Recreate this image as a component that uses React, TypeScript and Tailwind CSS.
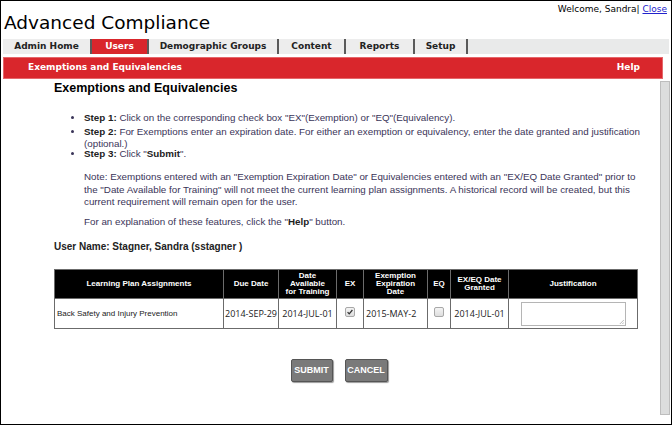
import React from 'react';

const tabs = [
  { label: 'Admin Home', w: 'w-[89px]' },
  { label: 'Users', w: 'w-[57px]', active: true },
  { label: 'Demographic Groups', w: 'w-[130px]' },
  { label: 'Content', w: 'w-[67px]' },
  { label: 'Reports', w: 'w-[69px]' },
  { label: 'Setup', w: 'w-[53px]' },
];

const cols = [
  { label: 'Learning Plan Assignments', w: 'w-[169px]', px: 'px-[2px]' },
  { label: 'Due Date', w: 'w-[55px]', px: 'px-[2px]' },
  { label: 'Date Available for Training', w: 'w-[58px]', px: 'px-[6px]' },
  { label: 'EX', w: 'w-[27px]', px: 'px-[2px]' },
  { label: 'Exemption Expiration Date', w: 'w-[64px]', px: 'px-[11px]' },
  { label: 'EQ', w: 'w-[23px]', px: 'px-[2px]' },
  { label: 'EX/EQ Date Granted', w: 'w-[58px]', px: 'px-[6px]' },
  { label: 'Justification', w: 'w-[129px]', px: 'px-[2px]' },
];

function Check({ checked }: { checked?: boolean }) {
  return (
    <span className="inline-flex h-[10px] w-[10px] items-center justify-center rounded-[2px] border border-[#a8a8a8] bg-gradient-to-b from-[#f4f4f4] to-[#dedede]">
      {checked && (
        <svg viewBox="0 0 10 10" className="h-[8px] w-[8px]">
          <path d="M2 5.2 L4 7.3 L8 2.5" fill="none" stroke="#333" strokeWidth="1.6" />
        </svg>
      )}
    </span>
  );
}

export default function App() {
  const verdana = { fontFamily: '"DejaVu Sans", Verdana, sans-serif' };
  const arial = { fontFamily: '"Liberation Sans", Arial, sans-serif' };
  const dateFont = { fontFamily: '"Open Sans", sans-serif' };

  return (
    <div className="flex h-[425px] w-[672px] flex-col overflow-hidden border border-black bg-white" style={verdana}>
      <div className="flex items-start justify-between">
        <h1 className="mt-[11px] ml-[3px] text-[18.5px] leading-[22px] text-black">Advanced Compliance</h1>
        <div className="mt-[2px] mr-[4px] text-[9px] text-black">
          Welcome, Sandra| <a className="text-[#2222cc] underline">Close</a>
        </div>
      </div>

      <div className="mt-[5px] ml-[2px] mr-[2px] flex h-[15px] bg-[#e9eaea]">
        {tabs.map((t) => (
          <div
            key={t.label}
            className={`${t.w} flex items-center justify-center border-r-2 border-[#5a5a5a] text-[9px] font-bold ${
              t.active ? 'bg-[#d9262c] text-white' : 'bg-[#ededed] text-[#222]'
            }`}
          >
            {t.label}
          </div>
        ))}
      </div>

      <div className="mt-[3px] ml-[2px] mr-[8px] flex h-[22px] items-center justify-between border border-[#e5676b] bg-[#d9262c] pl-[24px] pr-[22px] text-[9px] font-bold text-white">
        <span>Exemptions and Equivalencies</span>
        <span>Help</span>
      </div>

      <div className="flex flex-1">
        <div className="flex-1 pl-[53px] pr-[14px]" style={arial}>
          <h2 className="mt-[1px] text-[12.5px] font-bold leading-[16px] text-black">Exemptions and Equivalencies</h2>

          <ul className="mt-[16px] ml-[30px] list-disc text-[9.8px] leading-[12px] text-[#3a3458]">
            <li className="mb-[2px]">
              <b className="text-[#222]">Step 1:</b> Click on the corresponding check box "EX"(Exemption) or "EQ"(Equivalency).
            </li>
            <li>
              <b className="text-[#222]">Step 2:</b> For Exemptions enter an expiration date. For either an exemption or equivalency, enter the date granted and justification (optional.)
            </li>
            <li className="-mt-[2px]">
              <b className="text-[#222]">Step 3:</b> Click "<b className="text-[#222]">Submit</b>".
            </li>
          </ul>

          <div className="mt-[11px] ml-[30px] text-[9.8px] leading-[12.5px] text-[#3a3458]">
            <p>
              Note: Exemptions entered with an "Exemption Expiration Date" or Equivalencies entered with an "EX/EQ Date Granted" prior to the "Date Available for Training" will not meet the current learning plan assignments. A historical record will be created, but this current requirement will remain open for the user.
            </p>
            <p className="mt-[7px]">
              For an explanation of these features, click the "<b className="text-[#222]">Help</b>" button.
            </p>
          </div>

          <p className="mt-[11px] text-[10px] font-bold text-[#222]">User Name: Stagner, Sandra (sstagner )</p>

          <table className="mt-[15px] border-collapse">
            <thead>
              <tr className="h-[29px] bg-black text-[8px] font-bold leading-[8px] text-white">
                {cols.map((c) => (
                  <th key={c.label} className={`${c.w} ${c.px} border border-[#6b6b6b] text-center align-middle`}>
                    {c.label}
                  </th>
                ))}
              </tr>
            </thead>
            <tbody>
              <tr className="h-[30px] text-[8px] text-[#222]">
                <td className="border border-[#6b6b6b] pl-[2px]">Back Safety and Injury Prevention</td>
                <td className="border border-[#6b6b6b] text-center text-[9px]" style={dateFont}>2014-SEP-29</td>
                <td className="border border-[#6b6b6b] text-center text-[9px]" style={dateFont}>2014-JUL-01</td>
                <td className="border border-[#6b6b6b] text-center">
                  <Check checked />
                </td>
                <td className="border border-[#6b6b6b] pl-[2px] text-left text-[9px]" style={dateFont}>2015-MAY-2</td>
                <td className="border border-[#6b6b6b] text-center">
                  <Check />
                </td>
                <td className="border border-[#6b6b6b] text-center text-[9px]" style={dateFont}>2014-JUL-01</td>
                <td className="border border-[#6b6b6b] text-center">
                  <div className="relative mx-auto h-[24px] w-[105px] border border-[#b5b5b5] bg-white">
                    <svg viewBox="0 0 6 6" className="absolute right-[1px] bottom-[1px] h-[5px] w-[5px]">
                      <path d="M6 1 L1 6 M6 4 L4 6" stroke="#999" strokeWidth="0.8" />
                    </svg>
                  </div>
                </td>
              </tr>
            </tbody>
          </table>

          <div className="mt-[30px] flex justify-center gap-[12px] pr-[22px]">
            <button className="h-[23px] w-[42px] rounded-[2px] border border-[#555] bg-[#7a7a7a] text-[9px] font-bold text-white shadow-[1px_1px_1px_#999]">SUBMIT</button>
            <button className="h-[23px] w-[43px] rounded-[2px] border border-[#555] bg-[#7a7a7a] text-[9px] font-bold text-white shadow-[1px_1px_1px_#999]">CANCEL</button>
          </div>
        </div>

        <div className="mt-[2px] mr-[1px] mb-[9px] w-[10px] border border-[#bdbdbd] bg-[#dcdddd]" />
      </div>
    </div>
  );
}
